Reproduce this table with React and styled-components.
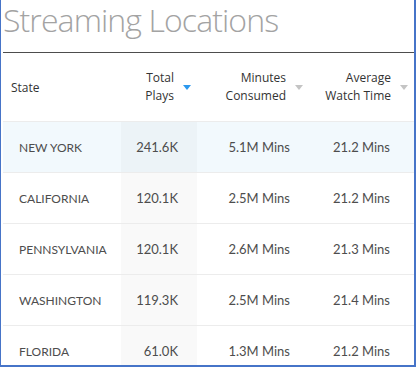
import React from "react";
import styled, { createGlobalStyle } from "styled-components";

const GlobalStyle = createGlobalStyle`
  html, body {
    margin: 0;
    padding: 0;
    background: #fff;
  }
`;

const columns = [
  { key: "state", label: ["State"], width: "118px", align: "left", bodyPad: 0 },
  { key: "plays", label: ["Total", "Plays"], width: "76px", align: "right", bodyPad: 19, sorted: true },
  { key: "minutes", label: ["Minutes", "Consumed"], width: "112px", align: "right", bodyPad: 19 },
  { key: "watch", label: ["Average", "Watch Time"], width: "1fr", align: "right", bodyPad: 24 },
];

const rows = [
  { state: "NEW YORK", plays: "241.6K", minutes: "5.1M Mins", watch: "21.2 Mins" },
  { state: "CALIFORNIA", plays: "120.1K", minutes: "2.5M Mins", watch: "21.2 Mins" },
  { state: "PENNSYLVANIA", plays: "120.1K", minutes: "2.6M Mins", watch: "21.3 Mins" },
  { state: "WASHINGTON", plays: "119.3K", minutes: "2.5M Mins", watch: "21.4 Mins" },
  { state: "FLORIDA", plays: "61.0K", minutes: "1.3M Mins", watch: "21.2 Mins" },
];

const template = columns.map((c) => c.width).join(" ");

const App = () => {
  return (
    <>
      <GlobalStyle />
      <Frame>
        <Title>Streaming Locations</Title>
        <HeaderRow>
          {columns.map((c) =>
            c.align === "left" ? (
              <StateHead key={c.key}>{c.label[0]}</StateHead>
            ) : (
              <HeadCell key={c.key}>
                <HeadText>
                  {c.label.map((line) => (
                    <span key={line}>{line}</span>
                  ))}
                </HeadText>
                <SortArrow $active={c.sorted} />
              </HeadCell>
            )
          )}
        </HeaderRow>
        {rows.map((r, i) => (
          <Row key={r.state} $hover={i === 0}>
            {columns.map((c) =>
              c.align === "left" ? (
                <StateCell key={c.key}>{r[c.key]}</StateCell>
              ) : (
                <NumCell key={c.key} $pad={c.bodyPad} $sorted={c.sorted}>
                  {r[c.key]}
                </NumCell>
              )
            )}
          </Row>
        ))}
      </Frame>
    </>
  );
};

const Frame = styled.div`
  box-sizing: border-box;
  width: 416px;
  height: 367px;
  overflow: hidden;
  padding-left: 2px;
  border-left: 1px solid #4674c8;
  border-right: 2px solid #4674c8;
  border-bottom: 2px solid #4674c8;
  background: #fff;
`;

const Title = styled.div`
  font-family: "Open Sans", sans-serif;
  font-size: 32px;
  font-weight: 300;
  line-height: 40px;
  letter-spacing: -0.9px;
  color: #a3a3a3;
  padding-bottom: 12px;
  border-bottom: 1px solid #4d4d4d;
  white-space: nowrap;
`;

const HeaderRow = styled.div`
  display: grid;
  grid-template-columns: ${template};
  height: 68px;
  border-bottom: 1px solid #ececec;
  font-family: "Open Sans", sans-serif;
  font-size: 12px;
  color: #333;
`;

const StateHead = styled.div`
  display: flex;
  align-items: center;
  padding-left: 8px;
`;

const HeadCell = styled.div`
  display: flex;
  align-items: center;
  justify-content: flex-end;
  gap: 9px;
  padding-right: 6px;
`;

const HeadText = styled.div`
  display: flex;
  flex-direction: column;
  align-items: flex-end;
  line-height: 18px;
  white-space: nowrap;
`;

const SortArrow = styled.span`
  width: 0;
  height: 0;
  border-left: 4px solid transparent;
  border-right: 4px solid transparent;
  border-top: 5px solid ${(p) => (p.$active ? "#2b98ee" : "#c4c4c4")};
`;

const Row = styled.div`
  display: grid;
  grid-template-columns: ${template};
  height: 50px;
  border-bottom: 1px solid #ececec;
  background: ${(p) => (p.$hover ? "#f2f9fd" : "#fff")};
  font-family: Lato, sans-serif;
  font-size: 13px;
  color: #4d4d4d;
`;

const StateCell = styled.div`
  display: flex;
  align-items: center;
  padding-left: 16px;
  font-size: 12px;
  white-space: nowrap;
`;

const NumCell = styled.div`
  display: flex;
  align-items: center;
  justify-content: flex-end;
  padding-right: ${(p) => p.$pad}px;
  background: ${(p) => (p.$sorted ? "rgba(0, 0, 0, 0.022)" : "transparent")};
  white-space: nowrap;
`;

export default App;
